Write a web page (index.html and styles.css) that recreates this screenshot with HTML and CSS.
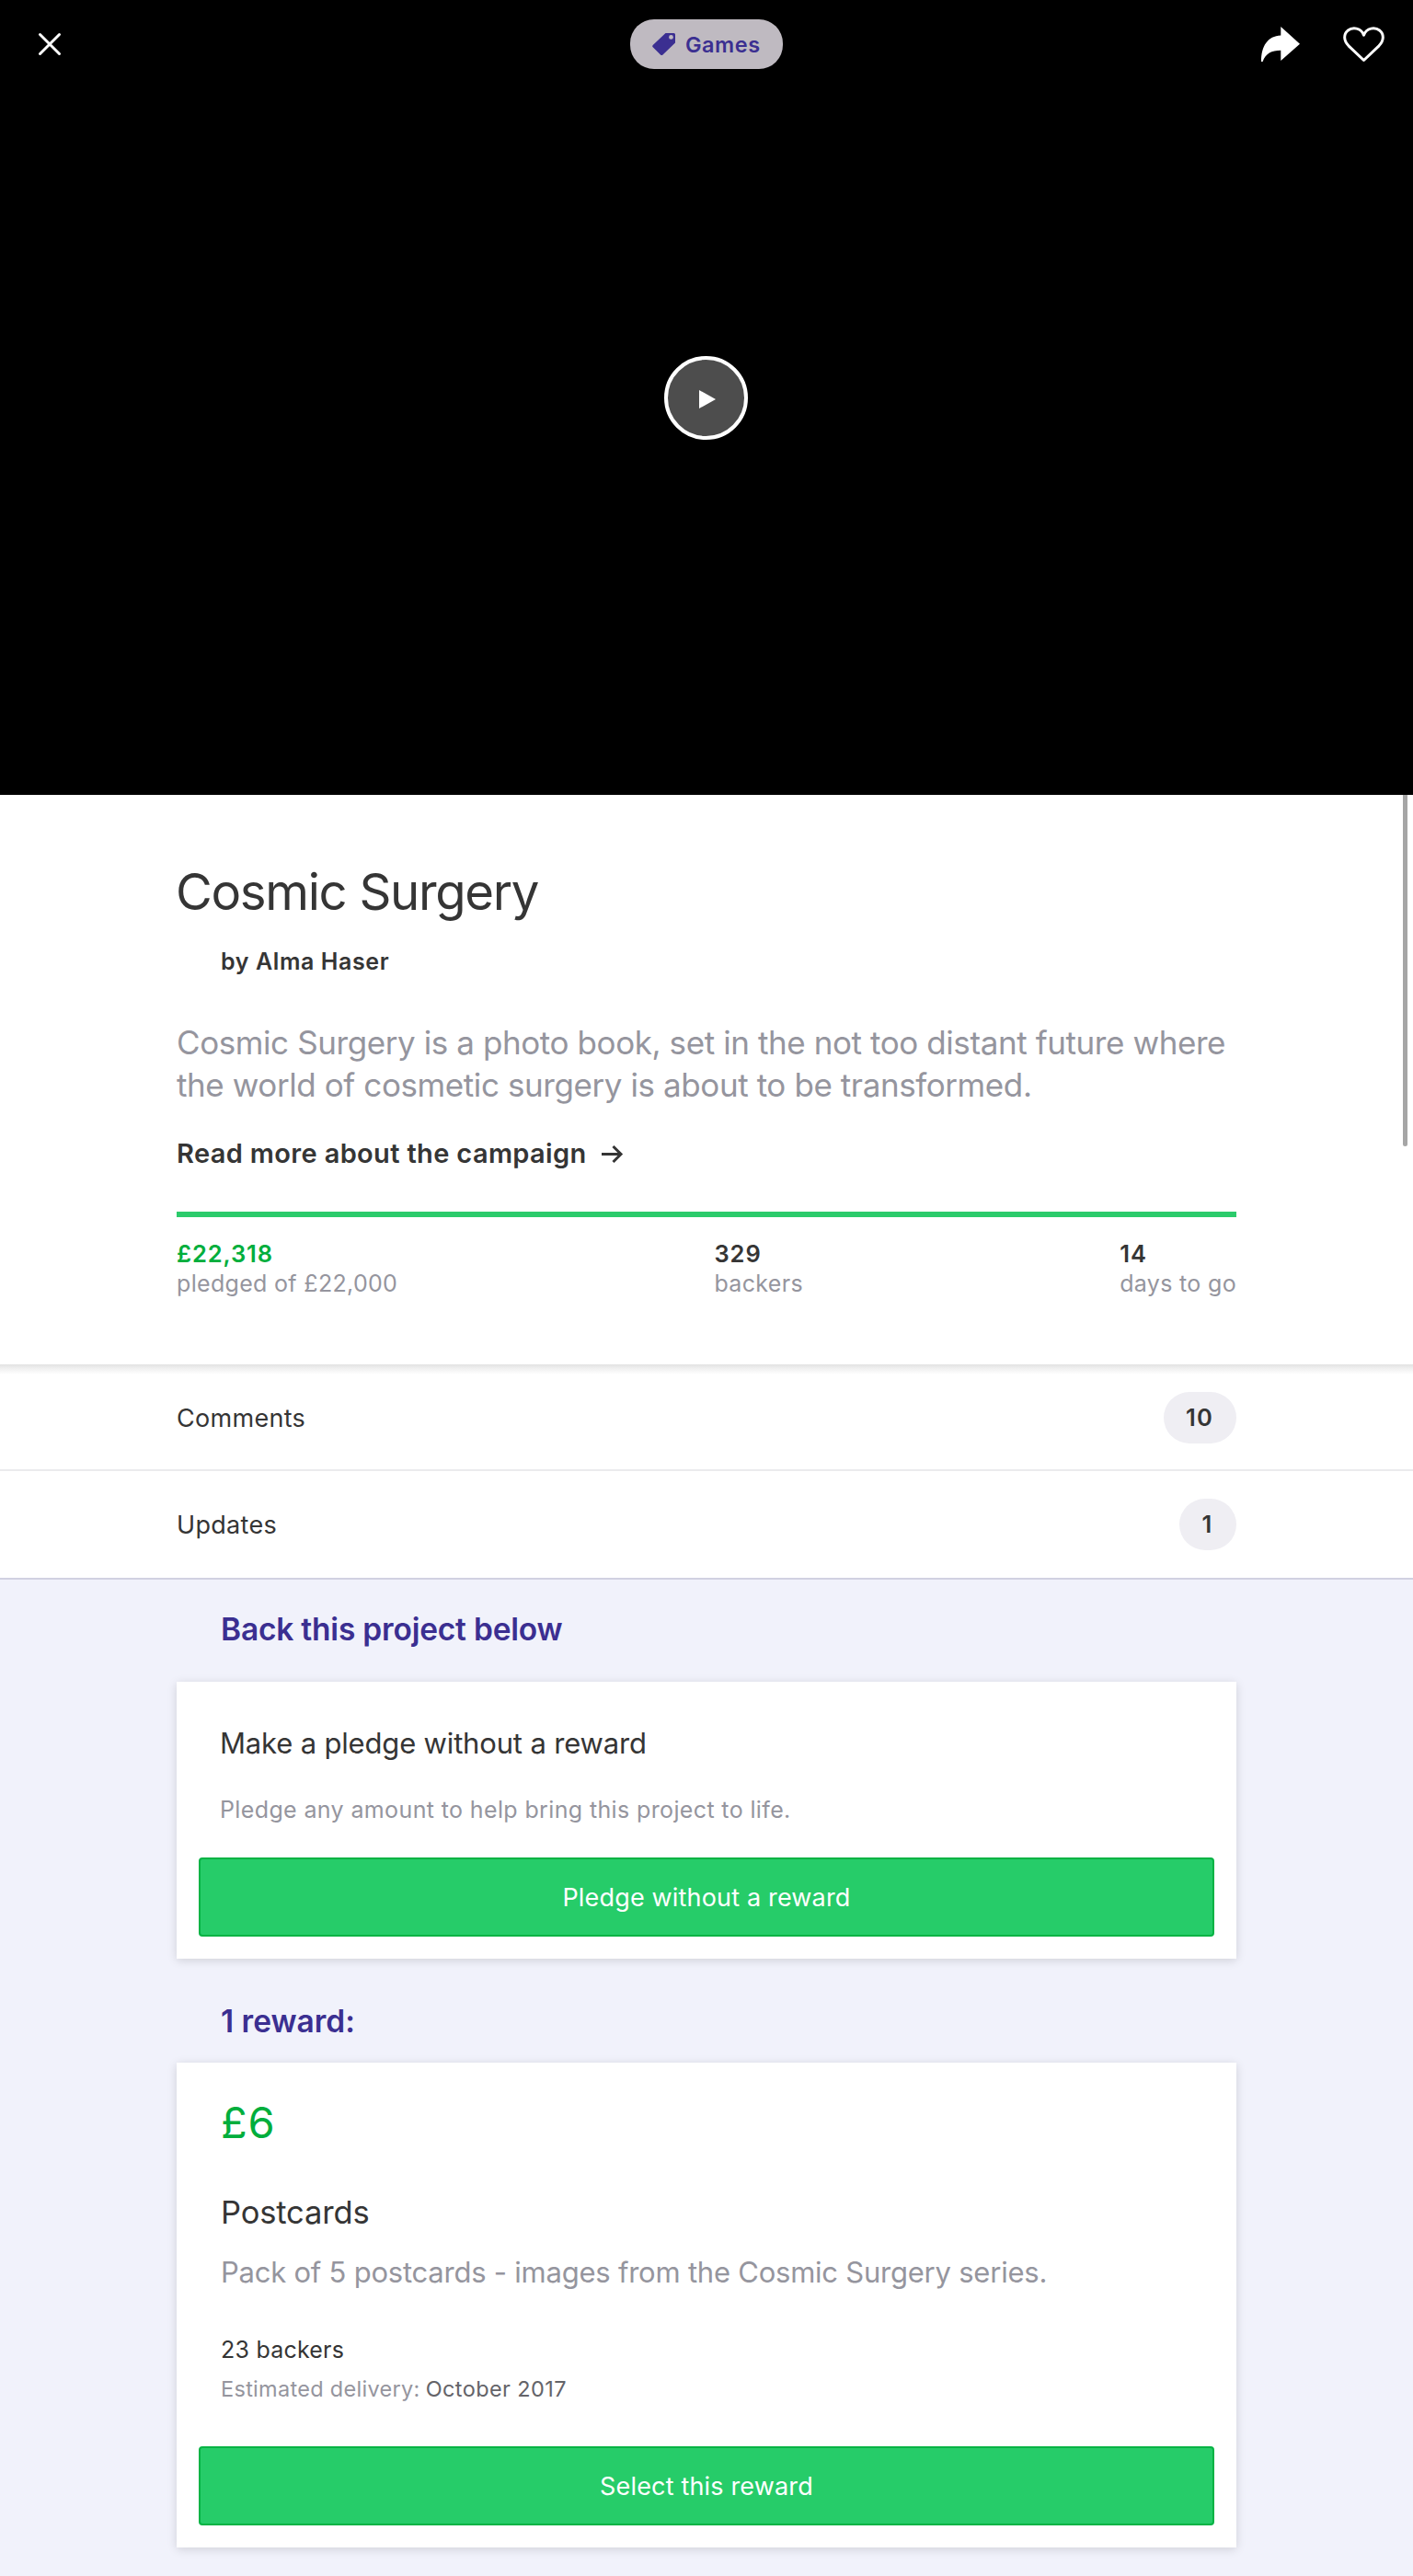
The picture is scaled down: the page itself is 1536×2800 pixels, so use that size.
FILE: index.html
```html
<!DOCTYPE html>
<html lang="en">
<head>
<meta charset="utf-8">
<title>Cosmic Surgery</title>
<link rel="stylesheet" href="styles.css">
</head>
<body>
<header class="hero">
  <nav class="topbar">
    <svg class="icon-close" viewBox="0 0 24 24"><path d="M1.5 1.5l21 21M22.5 1.5l-21 21"/></svg>
    <div class="category">
      <svg class="icon-tag" viewBox="0 0 25 24"><path fill-rule="evenodd" d="M14.5 0H23.5Q25 0 25 1.5V10.500L11.500 23.500Q10.300 24.600 9 23.400L.700 15.300Q-.500 14 .700 12.900ZM20.500 2A2.400 2.400 0 1 0 20.500 6.800A2.400 2.400 0 1 0 20.500 2Z"/></svg>
      <span>Games</span>
    </div>
    <div class="actions">
      <svg class="icon-share" viewBox="0 0 42 38"><path d="M21.300 0L42 18.700L21.300 37V25.800C11 26 5 29 1.600 38H0C0 21 7 10.200 21.300 9.500Z"/></svg>
      <svg class="icon-heart" viewBox="0 0 45 39"><path d="M22.500 36.500L6 20.800C.300 15 .500 8 5 4.300C10.500 0 19.500 1.200 22.500 9.200C25.500 1.200 34.500 0 40 4.300C44.500 8 44.700 15 39 20.800Z"/></svg>
    </div>
  </nav>
  <button class="play" aria-label="Play">
    <svg class="icon-play" viewBox="0 0 18 20"><path d="M0 0L18 10L0 20Z"/></svg>
  </button>
</header>

<section class="summary">
  <h1 class="title">Cosmic Surgery</h1>
  <div class="creator">by Alma Haser</div>
  <p class="blurb">Cosmic Surgery is a photo book, set in the not too distant future where<br>the world of cosmetic surgery is about to be transformed.</p>
  <a class="more"><span>Read more about the campaign</span><svg class="icon-arrow" viewBox="0 0 23 19"><path d="M0 9.500H21M12.500 1L21 9.500L12.500 18"/></svg></a>
  <div class="progress"></div>
  <div class="stats">
    <div><div class="stat-value pledged">£22,318</div><div class="stat-label">pledged of £22,000</div></div>
    <div><div class="stat-value">329</div><div class="stat-label">backers</div></div>
    <div><div class="stat-value">14</div><div class="stat-label">days to go</div></div>
  </div>
  <div class="scroll-thumb"></div>
</section>

<div class="row comments"><span>Comments</span><span class="count">10</span></div>
<div class="row updates"><span>Updates</span><span class="count">1</span></div>

<main class="rewards">
  <h2 class="heading">Back this project below</h2>
  <article class="card">
    <h3 class="card-title">Make a pledge without a reward</h3>
    <p class="card-note">Pledge any amount to help bring this project to life.</p>
    <button class="cta">Pledge without a reward</button>
  </article>
  <h2 class="heading second">1 reward:</h2>
  <article class="card reward">
    <div class="amount">£6</div>
    <h3 class="reward-title">Postcards</h3>
    <p class="reward-text">Pack of 5 postcards - images from the Cosmic Surgery series.</p>
    <div class="reward-backers">23 backers</div>
    <div class="delivery"><span>Estimated delivery:</span><span class="date">October 2017</span></div>
    <button class="cta">Select this reward</button>
  </article>
</main>
</body>
</html>
```
FILE: styles.css
```css
* { box-sizing: border-box; margin: 0; padding: 0; }
body { width: 1536px; background: #fff; color: #353535; font-family: Inter, "Liberation Sans", sans-serif; font-size: 25px; }
svg { display: block; overflow: visible; }
button { border: 0; font-family: inherit; }
h1, h2, h3 { font-weight: 400; }

.hero { position: relative; height: 864px; background: #000; }
.topbar { display: grid; grid-template-columns: 1fr auto 1fr; align-items: center; height: 96px; padding: 0 31px 0 42px; }
.icon-close { width: 24px; height: 24px; fill: none; stroke: #fff; stroke-width: 3; stroke-linecap: round; }
.category { display: flex; align-items: center; gap: 11px; width: 166px; height: 54px; padding-left: 24px; margin-left: -5px; margin-right: 6px; border-radius: 26px; background: #bfbac1; color: #3b2f91; font-size: 23.5px; font-weight: 600; letter-spacing: .5px; }
.icon-tag { width: 25px; height: 24px; fill: #3b2f91; }
.category span { padding-top: 1px; }
.actions { display: flex; justify-content: flex-end; align-items: center; gap: 47px; }
.icon-share { width: 42px; height: 38px; fill: #fff; }
.icon-heart { width: 45px; height: 39px; fill: none; stroke: #fff; stroke-width: 3; stroke-linejoin: round; }
.play { position: absolute; left: 722px; top: 387px; width: 91px; height: 91px; display: flex; align-items: center; justify-content: center; padding-top: 3px; padding-left: 2px; border: 4px solid #fff; border-radius: 50%; background: #4d4d4d; }
.icon-play { width: 18px; height: 20px; fill: #fff; }

.summary { position: relative; height: 619px; padding: 73px 192px 0; background: #fff; }
.summary::after { content: ""; position: absolute; left: 0; right: 0; top: 100%; height: 11px; background: linear-gradient(#e2e2e2, #f1f1f1 45%, #fff); }
.title { margin-left: -1px; font-size: 54.5px; line-height: 64px; letter-spacing: -1.32px; }
.creator { margin: 28px 0 0 48px; font-weight: 600; line-height: 32px; letter-spacing: .6px; }
.blurb { margin-top: 49px; color: #95959e; font-size: 35px; line-height: 46px; letter-spacing: -.41px; white-space: nowrap; }
.more { display: flex; align-items: center; gap: 16px; margin-top: 34px; font-size: 29px; font-weight: 600; line-height: 36px; letter-spacing: .35px; }
.icon-arrow { width: 23px; height: 19px; fill: none; stroke: #353535; stroke-width: 3; }
.progress { height: 6px; margin-top: 45px; background: #2bcb6b; }
.stats { display: flex; justify-content: space-between; margin-top: 24px; line-height: 32px; }
.stat-value { font-size: 25.5px; font-weight: 600; letter-spacing: .9px; }
.pledged { color: #00ae3c; }
.stat-label { color: #95959e; letter-spacing: .32px; }
.scroll-thumb { position: absolute; right: 6px; top: 0; width: 5px; height: 382px; border-radius: 0 0 3px 3px; background: #a6a6a6; }

.row { display: flex; justify-content: space-between; align-items: center; padding: 0 192px; font-size: 27px; letter-spacing: .3px; }
.comments { height: 116px; padding-top: 2px; border-bottom: 2px solid #ebebed; }
.updates { height: 118px; border-bottom: 2px solid #d1d1e2; }
.count { min-width: 62px; height: 56px; padding: 0 25px 0 24px; border-radius: 28px; background: #efeef3; font-size: 25.5px; font-weight: 600; line-height: 56px; letter-spacing: 1.2px; text-align: center; }

.rewards { height: 1083px; padding: 33px 192px 0; background: #f1f2fb; }
.heading { padding-left: 48px; color: #3b2f91; font-size: 33.5px; font-weight: 600; line-height: 42px; letter-spacing: -.2px; }
.second { margin-top: 47px; letter-spacing: 0; }
.card { margin-top: 36px; padding: 48px 24px 24px; background: #fff; box-shadow: 0 2px 10px rgba(0, 0, 0, .14); }
.card-title, .card-note, .amount, .reward-title, .reward-text, .reward-backers, .delivery { margin-left: 24px; }
.card-title { margin-left: 23px; font-size: 31px; line-height: 38px; letter-spacing: -.17px; }
.card-note { margin-top: 37px; margin-left: 23px; color: #95959e; font-size: 25px; line-height: 32px; letter-spacing: .37px; }
.cta { display: block; width: 100%; height: 86px; margin-top: 36px; border: 2px solid #06b344; border-radius: 4px; background: #26cc69; color: #fff; font-size: 27px; letter-spacing: .17px; }
.reward { margin-top: 24px; padding-top: 37px; }
.amount { color: #00ae3c; font-size: 47px; line-height: 56px; letter-spacing: .8px; }
.reward-title { margin-top: 49px; font-size: 34.5px; line-height: 42px; letter-spacing: -.15px; }
.reward-text { margin-top: 25px; color: #95959e; font-size: 31px; line-height: 38px; letter-spacing: -.23px; }
.reward-backers { margin-top: 49px; line-height: 32px; letter-spacing: .22px; }
.delivery { display: flex; gap: 6px; margin-top: 12px; color: #95959e; font-size: 23.5px; line-height: 30px; letter-spacing: .3px; }
.date { color: #646469; letter-spacing: .4px; }
.reward .cta { margin-top: 47px; }
```
